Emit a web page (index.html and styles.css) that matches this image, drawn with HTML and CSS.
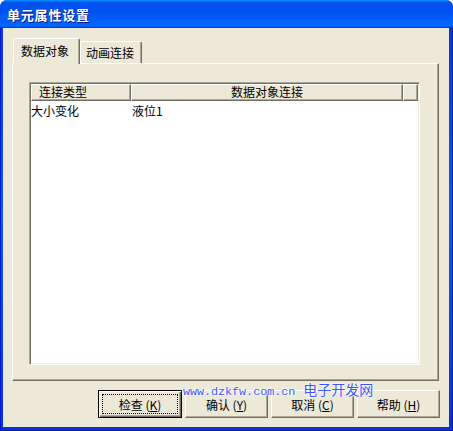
FILE: index.html
```html
<!DOCTYPE html>
<html lang="zh-CN">
<head>
<meta charset="utf-8">
<title>单元属性设置</title>
<link rel="stylesheet" href="styles.css">
</head>
<body>
<div class="window">
  <div class="titlebar"><span class="title">单元属性设置</span></div>
  <div class="client">
    <div class="tabs">
      <div class="tab tab-active">数据对象</div>
      <div class="tab">动画连接</div>
    </div>
    <div class="panel">
      <div class="listview">
        <div class="lv-header">
          <div class="lv-col lv-col1">连接类型</div>
          <div class="lv-col lv-col2">数据对象连接</div>
          <div class="lv-col lv-col3"></div>
        </div>
        <div class="lv-row">
          <div class="lv-cell lv-cell1">大小变化</div>
          <div class="lv-cell lv-cell2">液位1</div>
        </div>
      </div>
    </div>
    <div class="buttons">
      <button class="btn btn-default"><span class="focus">检查 (<u>K</u>)</span></button>
      <button class="btn"><span class="label">确认 (<u>Y</u>)</span></button>
      <button class="btn"><span class="label">取消 (<u>C</u>)</span></button>
      <button class="btn"><span class="label">帮助 (<u>H</u>)</span></button>
    </div>
  </div>
  <div class="watermark"><span class="wm-url">www.dzkfw.com.cn</span><span class="wm-cn">电子开发网</span></div>
</div>
</body>
</html>
```

FILE: styles.css
```css
html, body {
  margin: 0;
  padding: 0;
  background: #ffffff;
}

body {
  width: 453px;
  height: 431px;
  overflow: hidden;
  font-family: "Noto Sans CJK SC", "DejaVu Sans", sans-serif;
  font-size: 12px;
  color: #000;
}

.window {
  position: relative;
  width: 453px;
  height: 431px;
  box-sizing: border-box;
  background: linear-gradient(180deg, #0831d9 0%, #0a5bef 50%, #0831d9 100%);
  border-radius: 7px 7px 0 0;
  display: flex;
  flex-direction: column;
  padding: 0 4px 4px 3px;
  background-color: #0d4be4;
  box-shadow: inset 1px 0 #0019cf, inset -1px 0 #001ea0, inset 0 -1px #001ea0;
}

.titlebar {
  height: 28px;
  margin: 0 -4px 0 -3px;
  padding-left: 7px;
  display: flex;
  align-items: center;
  border-radius: 7px 7px 0 0;
  background: linear-gradient(180deg, #0997ff 0%, #0053ee 9%, #0050ee 40%, #0066ff 86%, #0066ff 92%, #005bff 95%, #003dd7 97%, #003dd7 100%);
}

.title {
  color: #fff;
  font-weight: 700;
  font-size: 13px;
  letter-spacing: 0.8px;
  text-shadow: 1px 1px #0a1883;
  line-height: 14px;
  padding-top: 1px;
}

.client {
  flex: 1;
  background: #ece9d8;
  display: flex;
  flex-direction: column;
  padding: 10px 0 0 9px;
}

.tabs {
  display: flex;
  align-items: flex-end;
  height: 25px;
  padding-left: 1px;
  position: relative;
  z-index: 1;
}

.tab {
  box-sizing: border-box;
  height: 22px;
  padding: 3px 0 0 5px;
  width: 62px;
  border-left: 1px solid #ffffff;
  border-top: 1px solid #ffffff;
  border-right: 1px solid #716f64;
  box-shadow: inset -1px 0 #aca899;
  border-radius: 2px 2px 0 0;
  line-height: 15px;
  background: #ece9d8;
}

.tab-active {
  height: 26px;
  width: 67px;
  padding: 4px 0 0 7px;
  margin-bottom: -1px;
}

.panel {
  box-sizing: border-box;
  width: 427px;
  height: 318px;
  border-left: 1px solid #ffffff;
  border-top: 1px solid #ffffff;
  border-right: 1px solid #716f64;
  border-bottom: 1px solid #716f64;
  box-shadow: inset -1px -1px #aca899;
  padding: 18px 0 0 16px;
}

.listview {
  box-sizing: border-box;
  width: 391px;
  height: 283px;
  background: #ffffff;
  border-top: 1px solid #aca899;
  border-left: 1px solid #aca899;
  border-right: 1px solid #ffffff;
  border-bottom: 1px solid #ffffff;
  box-shadow: inset 1px 1px #716f64, inset -1px -1px #f1efe2;
  padding: 1px 1px 0 1px;
}

.lv-header {
  display: flex;
  height: 17px;
}

.lv-col {
  box-sizing: border-box;
  height: 17px;
  background: #ece9d8;
  border-top: 1px solid #ffffff;
  border-left: 1px solid #ffffff;
  border-right: 1px solid #716f64;
  border-bottom: 1px solid #716f64;
  box-shadow: inset -1px -1px #aca899;
  line-height: 14px;
  white-space: nowrap;
}

.lv-col1 {
  width: 100px;
  padding-left: 7px;
}

.lv-col2 {
  width: 272px;
  text-align: center;
}

.lv-col3 {
  flex: 1;
}

.lv-row {
  display: flex;
  height: 16px;
  line-height: 16px;
  margin-top: 2px;
}

.lv-cell1 {
  width: 100px;
  padding-left: 0;
}

.lv-cell2 {
  padding-left: 1px;
}

.buttons {
  display: flex;
  gap: 3px;
  padding: 9px 0 0 86px;
}

.btn {
  box-sizing: border-box;
  width: 83px;
  height: 28px;
  margin: 0;
  padding: 0;
  font-family: "Noto Sans CJK SC", "DejaVu Sans", sans-serif;
  font-size: 12px;
  color: #000;
  background: #ece9d8;
  border-top: 1px solid #ffffff;
  border-left: 1px solid #ffffff;
  border-right: 1px solid #716f64;
  border-bottom: 1px solid #716f64;
  box-shadow: inset -1px -1px #aca899;
  display: flex;
  align-items: center;
  justify-content: center;
}

.btn-default {
  width: 84px;
  border: 1px solid #000000;
  box-shadow: inset 1px 1px #ffffff, inset -1px -1px #716f64, inset -2px -2px #aca899;
  padding: 3px;
}

.focus {
  box-sizing: border-box;
  width: 100%;
  height: 100%;
  border: 1px dotted #000;
  display: flex;
  align-items: center;
  justify-content: center;
  white-space: pre;
}

.label {
  white-space: pre;
}

.btn u {
  text-underline-offset: 1px;
}

.watermark {
  position: absolute;
  left: 183px;
  top: 381px;
  color: #3a57ff;
  white-space: nowrap;
  text-shadow: 0 0 2px #fff, 0 0 2px #fff, 0 0 3px #fff;
  line-height: 17px;
}

.wm-url {
  font-family: "Liberation Mono", "DejaVu Sans Mono", monospace;
  font-size: 11.7px;
  letter-spacing: 0;
}

.wm-cn {
  font-family: "Noto Sans CJK SC", sans-serif;
  font-size: 14px;
  margin-left: 8px;
}
```
